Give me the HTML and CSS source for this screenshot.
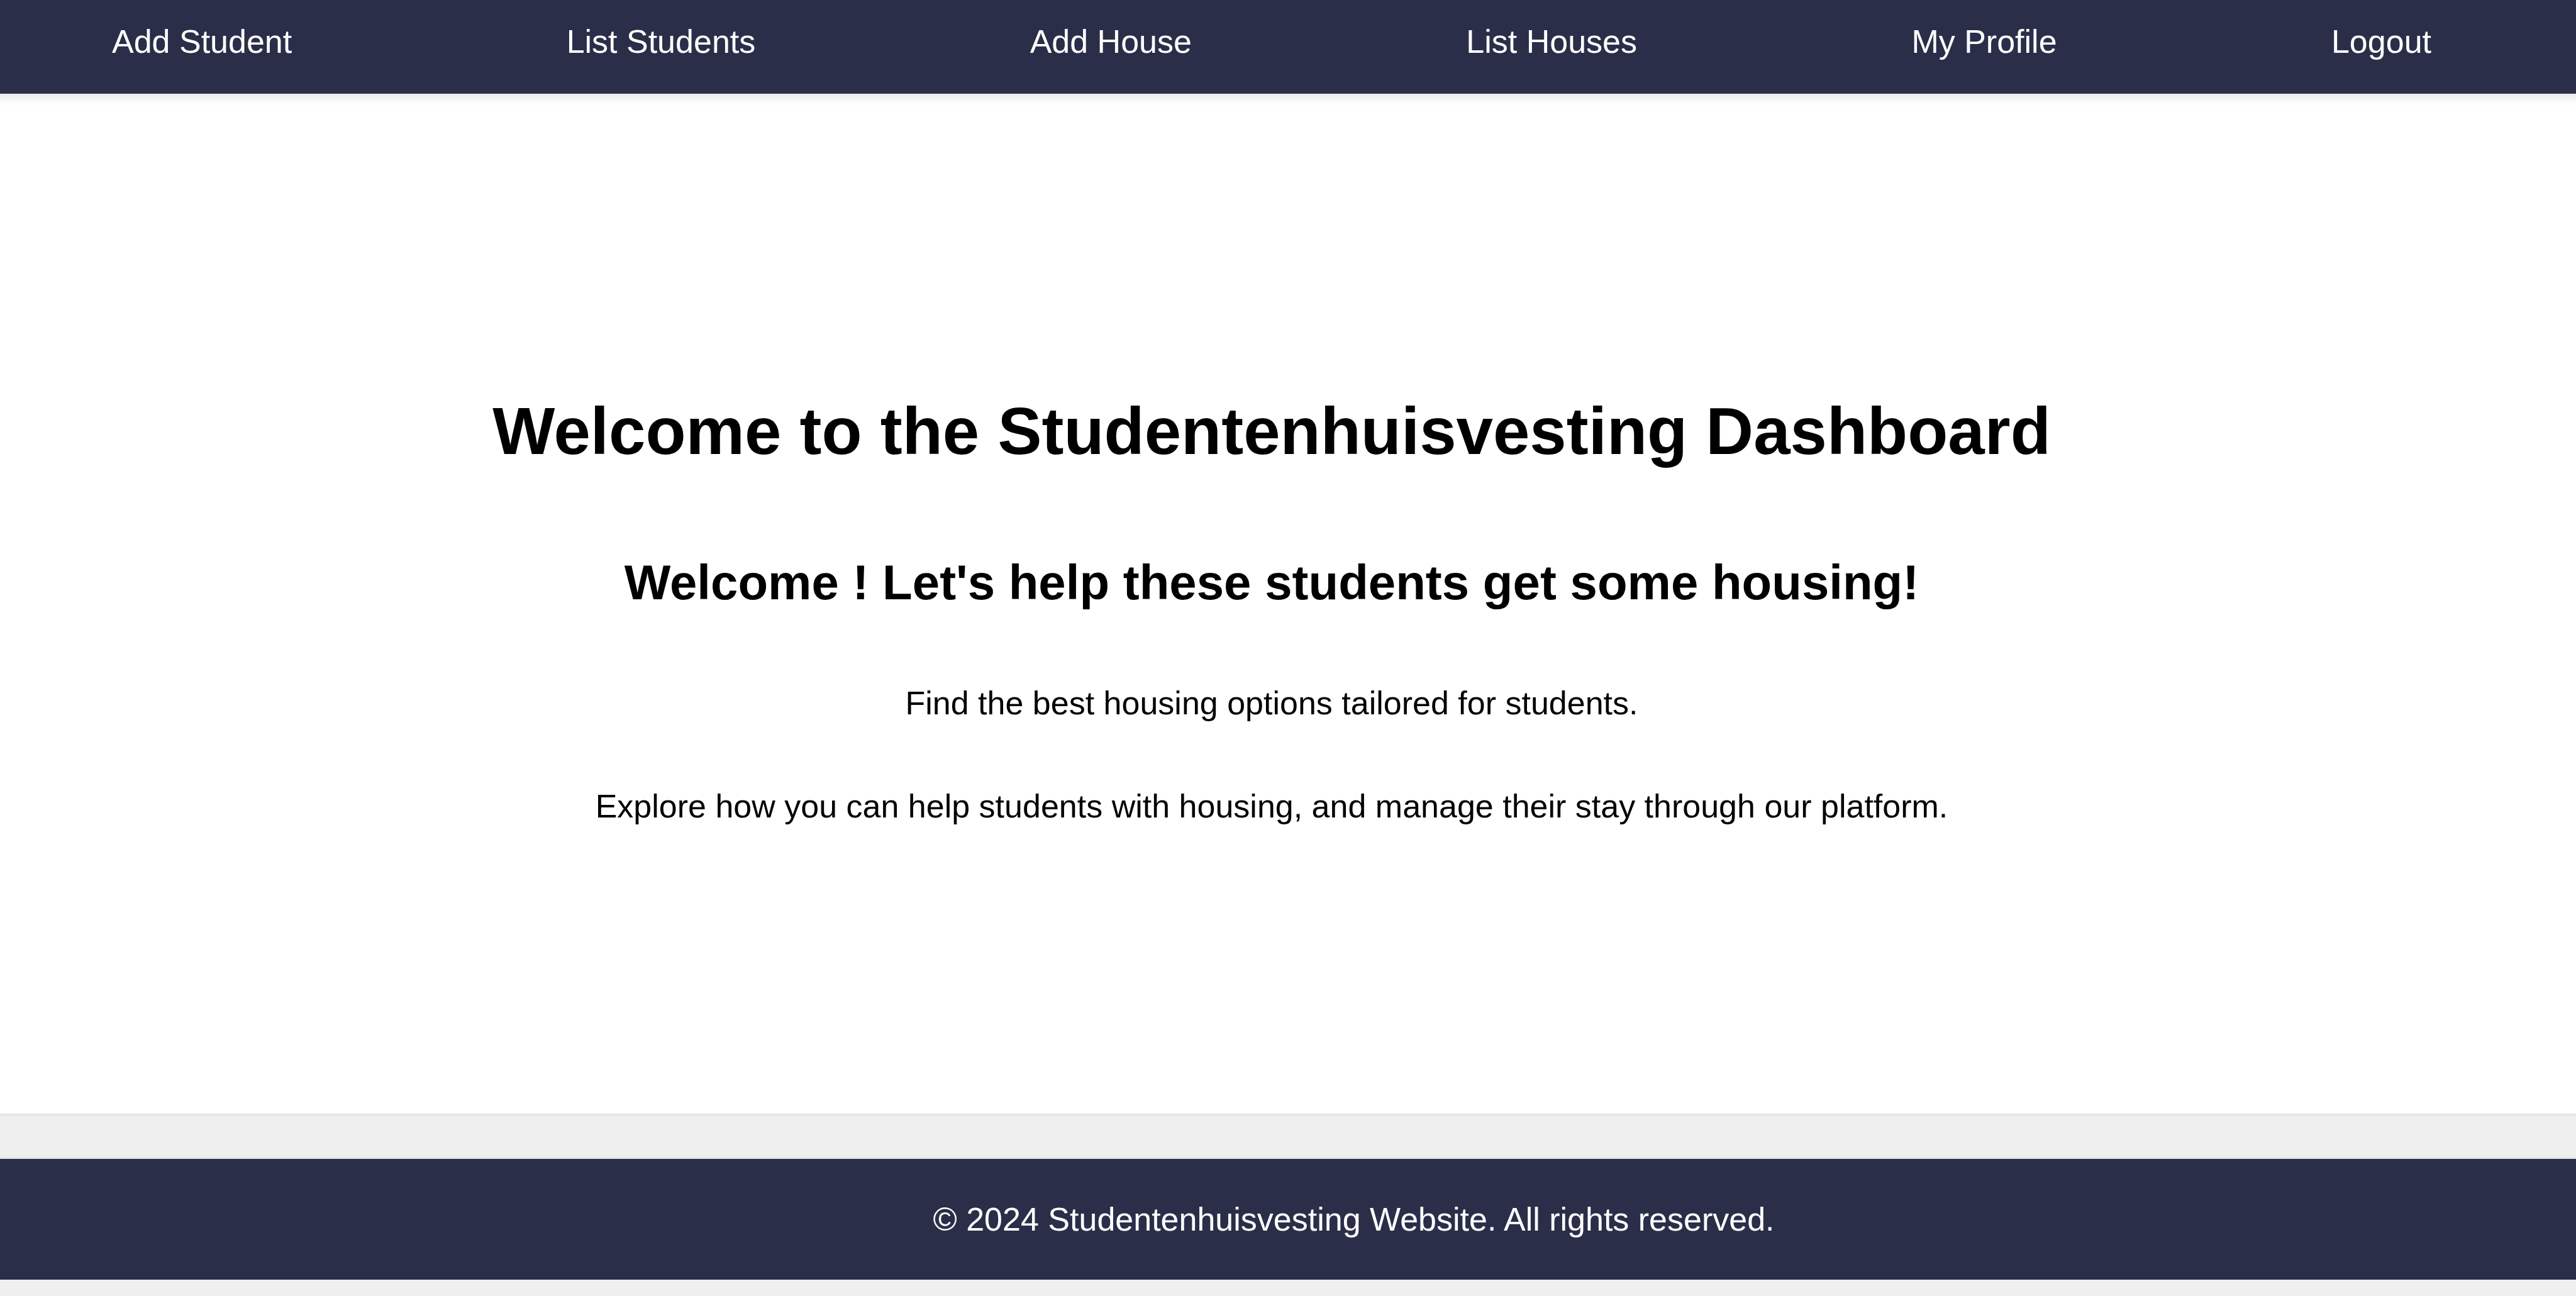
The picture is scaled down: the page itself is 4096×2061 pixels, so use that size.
FILE: index.html
```html
<!DOCTYPE html>
<html lang="en">
<head>
  <meta charset="utf-8">
  <title>Studentenhuisvesting Dashboard</title>
  <link rel="stylesheet" href="styles.css">
</head>
<body>
  <header class="site-header">
    <nav>
      <ul class="nav-list">
        <li><a href="#add-student">Add Student</a></li>
        <li><a href="#list-students">List Students</a></li>
        <li><a href="#add-house">Add House</a></li>
        <li><a href="#list-houses">List Houses</a></li>
        <li><a href="#profile">My Profile</a></li>
        <li><a href="#logout">Logout</a></li>
      </ul>
    </nav>
  </header>
  <main class="welcome">
    <h1>Welcome to the Studentenhuisvesting Dashboard</h1>
    <h2>Welcome ! Let's help these students get some housing!</h2>
    <p>Find the best housing options tailored for students.</p>
    <p>Explore how you can help students with housing, and manage their stay through our platform.</p>
  </main>
  <footer class="site-footer">
    <p>© 2024 Studentenhuisvesting Website. All rights reserved.</p>
  </footer>
</body>
</html>
```
FILE: styles.css
```css
* {
  box-sizing: border-box;
}

body {
  display: flex;
  flex-direction: column;
  min-height: 100vh;
  margin: 0;
  padding-bottom: 26px;
  background: #efefef;
  color: #000;
  font: 52px/60px "Liberation Sans", Arial, sans-serif;
}

.site-header {
  position: relative;
  padding: 36px 230px 53px 178px;
  background: #2b2e48;
  box-shadow: 0 0 13px 7px rgba(0, 0, 0, 0.1);
}

.nav-list {
  display: flex;
  justify-content: space-between;
  margin: 0;
  padding: 0;
  list-style: none;
}

.nav-list a {
  display: block;
  color: #fff;
  text-decoration: none;
}

.welcome {
  display: flex;
  flex: 1;
  flex-direction: column;
  align-items: center;
  justify-content: center;
  padding-right: 52px;
  border-bottom: 3px solid #e5e5e5;
  background: #fff;
  text-align: center;
}

.welcome h1 {
  margin: 70px 0;
  font-size: 105px;
  line-height: 120px;
}

.welcome h2 {
  margin: 65px 0;
  font-size: 78px;
  line-height: 90px;
}

.welcome p {
  margin: 52px 0;
}

.site-footer {
  margin-top: 66px;
  padding: 66px 0 66px 209px;
  border-top: 3px solid #e5e5e5;
  background: #2b2e48;
  color: #fff;
  text-align: center;
}

.site-footer p {
  margin: 0;
}
```
